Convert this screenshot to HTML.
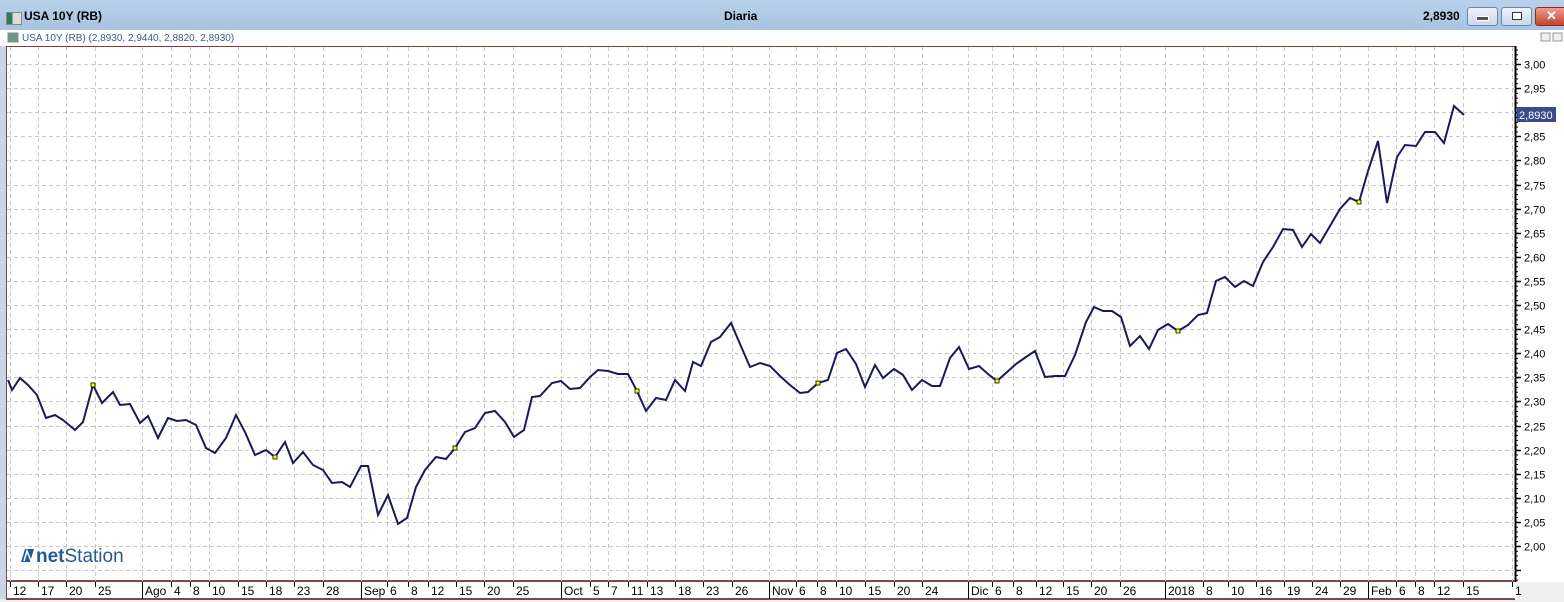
<!DOCTYPE html>
<html><head><meta charset="utf-8"><style>
html,body{margin:0;padding:0;width:1564px;height:602px;overflow:hidden;background:#fff;font-family:"Liberation Sans",sans-serif;}
#tb{position:absolute;left:0;top:0;width:1564px;height:30px;background:linear-gradient(#b9d1ea,#a9c3e0);}
.t{position:absolute;font-size:12px;font-weight:bold;color:#000;}
.btn{position:absolute;top:7px;height:17px;border:1px solid #6c84a6;border-radius:3px;background:linear-gradient(#eef3fa,#c9d8ec);}
</style></head><body>
<div id="tb"></div>
<div style="position:absolute;left:6px;top:12px;width:14px;height:11px;background:linear-gradient(90deg,#2e7a5e 40%,#ddd 40%);border:1px solid #888"></div>
<div class="t" style="left:24px;top:9px">USA 10Y (RB)</div>
<div class="t" style="left:724px;top:9px">Diaria</div>
<div class="t" style="left:1423px;top:9px">2,8930</div>
<div class="btn" style="left:1467px;width:29px"><div style="margin:8px auto 0;width:11px;height:3px;background:#555;border:1px solid #fff"></div></div>
<div class="btn" style="left:1501px;width:29px"><div style="margin:4px auto 0;width:8px;height:6px;border:1px solid #333;background:#fff"></div></div>
<div class="btn" style="left:1535px;width:40px;background:linear-gradient(#e8a08a,#c6452a);border-color:#8a3020"><div style="color:#fff;font-weight:bold;font-size:13px;margin-left:10px;margin-top:0px">✕</div></div>
<svg width="1564" height="602" style="position:absolute;left:0;top:0" xmlns="http://www.w3.org/2000/svg">
<rect x="0" y="30" width="1564" height="16" fill="#fff"/>
<rect x="8" y="33" width="10" height="9" fill="#6a9a88" stroke="#888"/>
<text x="22" y="41" font-size="10" fill="#3a5a8a" font-family="Liberation Sans">USA 10Y (RB) (2,8930, 2,9440, 2,8820, 2,8930)</text>
<rect x="1541" y="33" width="9" height="8" fill="#eee" stroke="#999"/><rect x="1553" y="33" width="9" height="8" fill="#eee" stroke="#999"/>
<rect x="0" y="46" width="6" height="556" fill="#c9d6e5"/>
<rect x="0" y="599" width="1564" height="3" fill="#eeeeee"/>
<line x1="6" y1="46.5" x2="1515" y2="46.5" stroke="#8b3a3a"/>
<line x1="6.5" y1="46" x2="6.5" y2="600" stroke="#7a4a4a"/>
<line x1="1515.5" y1="46" x2="1515.5" y2="582" stroke="#000" stroke-width="2"/>
<line x1="6" y1="581" x2="1515" y2="581" stroke="#7a4a4a" stroke-width="2"/>
<line x1="6" y1="599" x2="1515" y2="599" stroke="#7a4a4a" stroke-width="2"/>
<rect x="1516" y="582" width="48" height="20" fill="#f0f0f0"/>
<g id="g"></g>
<g><path d="M21 562 L25 549 L34 549 L30 562 Z" fill="#1f5c99"/><path d="M24 561 L27 551 L31 561" stroke="#fff" stroke-width="1.5" fill="none"/>
<text x="36" y="562" font-size="19" fill="#2a5a8a" font-family="Liberation Sans"><tspan font-weight="bold" fill="#1f5c99">net</tspan>Station</text></g>
</svg>
<script>
const s=document.getElementById('g');let h='';
const Y=v=>64+(3-v)*482;
for(let i=0;i<=21;i++){const v=3-i*0.05;const y=Math.round(Y(v))+.5;
 h+=`<line x1="7" y1="${y}" x2="1515" y2="${y}" stroke="#c8c8c8" stroke-dasharray="4,3"/>`;
 if(v>=1.99)h+=`<text x="1524" y="${y+4}" font-size="11" fill="#000" font-family="Liberation Sans">${v.toFixed(2).replace('.',',')}</text>`;
 h+=`<line x1="1515" y1="${y}" x2="1521" y2="${y}" stroke="#000" stroke-width="1.5"/>`;}
for(let y=50;y<581;y+=4.82)h+=`<line x1="1515" y1="${y.toFixed(1)}" x2="1518" y2="${y.toFixed(1)}" stroke="#000"/>`;
h+=`<line x1="7" y1="570.5" x2="1515" y2="570.5" stroke="#c8c8c8" stroke-dasharray="4,3"/>`;
const L=[[10,'12'],[38,'17'],[66,'20'],[95,'25'],[142,'Ago',1],[171,'4'],[190,'8'],[209,'10'],[238,'15'],[266,'18'],[294,'23'],[323,'28'],[361,'Sep',1],[387,'6'],[408,'8'],[428,'12'],[456,'15'],[484,'20'],[513,'25'],[561,'Oct',1],[590,'5'],[608,'7'],[628,'11'],[647,'13'],[675,'18'],[703,'23'],[732,'26'],[769,'Nov',1],[796,'6'],[817,'8'],[836,'10'],[865,'15'],[894,'20'],[922,'24'],[968,'Dic',1],[992,'6'],[1013,'8'],[1036,'12'],[1063,'15'],[1091,'20'],[1120,'26'],[1165,'2018',1],[1203,'8'],[1228,'10'],[1256,'16'],[1284,'19'],[1312,'24'],[1340,'29'],[1368,'Feb',1],[1396,'6'],[1415,'8'],[1434,'12'],[1463,'15'],[1512,'1']];
for(const [x,t,m] of L){h+=`<line x1="${x+.5}" y1="47" x2="${x+.5}" y2="581" stroke="#c8c8c8" stroke-dasharray="4,3"/>`;
 h+= m?`<line x1="${x+.5}" y1="582" x2="${x+.5}" y2="599" stroke="#000"/>`:`<line x1="${x+.5}" y1="582" x2="${x+.5}" y2="587" stroke="#000"/>`;
 h+=`<text x="${x+3}" y="595" font-size="12" fill="#000" font-family="Liberation Sans">${t}</text>`;}
const P=[[8,380],[12,390],[20,378],[28,385],[37,395],[46,418],[55,415],[63,420],[75,430],[83,422],[93,385],[102,403],[113,392],[120,405],[130,404],[140,423],[148,416],[158,438],[168,418],[177,421],[186,420],[196,425],[206,448],[215,453],[226,438],[236,415],[245,432],[255,455],[266,450],[275,457],[285,442],[293,463],[303,452],[313,465],[323,470],[332,483],[342,482],[350,487],[361,466],[368,466],[378,515],[388,495],[398,524],[407,518],[416,487],[425,470],[436,457],[446,459],[455,448],[465,432],[475,428],[485,413],[495,411],[505,422],[514,437],[524,430],[532,397],[540,396],[552,383],[561,381],[570,389],[580,388],[590,377],[598,370],[608,371],[618,374],[628,374],[637,391],[646,411],[656,398],[666,400],[675,380],[685,391],[693,362],[701,366],[711,342],[720,337],[731,323],[740,344],[750,367],[760,363],[770,366],[780,376],[790,385],[800,393],[808,392],[818,383],[828,380],[837,353],[846,349],[856,364],[865,387],[875,365],[883,378],[894,369],[903,375],[912,390],[922,380],[932,386],[940,386],[950,358],[959,347],[969,369],[979,366],[988,374],[997,381],[1006,373],[1016,364],[1026,357],[1035,351],[1045,377],[1055,376],[1065,376],[1075,355],[1086,322],[1094,307],[1103,311],[1112,311],[1121,317],[1130,346],[1140,336],[1149,349],[1158,330],[1168,324],[1178,331],[1188,325],[1198,315],[1207,313],[1216,281],[1225,277],[1235,287],[1244,281],[1253,286],[1263,262],[1273,247],[1283,229],[1293,230],[1302,247],[1311,234],[1320,243],[1330,226],[1340,209],[1350,198],[1359,202],[1368,171],[1378,141],[1387,203],[1397,157],[1405,145],[1416,146],[1425,132],[1435,132],[1444,143],[1454,106],[1464,115]];
h+=`<polyline points="${P.map(p=>p.join(',')).join(' ')}" fill="none" stroke="#1a1a5a" stroke-width="2"/>`;
for(const [x,y] of [[93,385],[275,457],[455,448],[637,391],[818,383],[997,381],[1178,331],[1359,202]])h+=`<rect x="${x-2}" y="${y-2}" width="4" height="4" fill="#ff0" stroke="#000" stroke-width=".8"/>`;
h+=`<rect x="1517" y="107" width="39" height="15" fill="#3a4a8a"/><text x="1519" y="119" font-size="11" fill="#fff" font-family="Liberation Sans">2,8930</text>`;
s.innerHTML=h;
</script>
</body></html>
